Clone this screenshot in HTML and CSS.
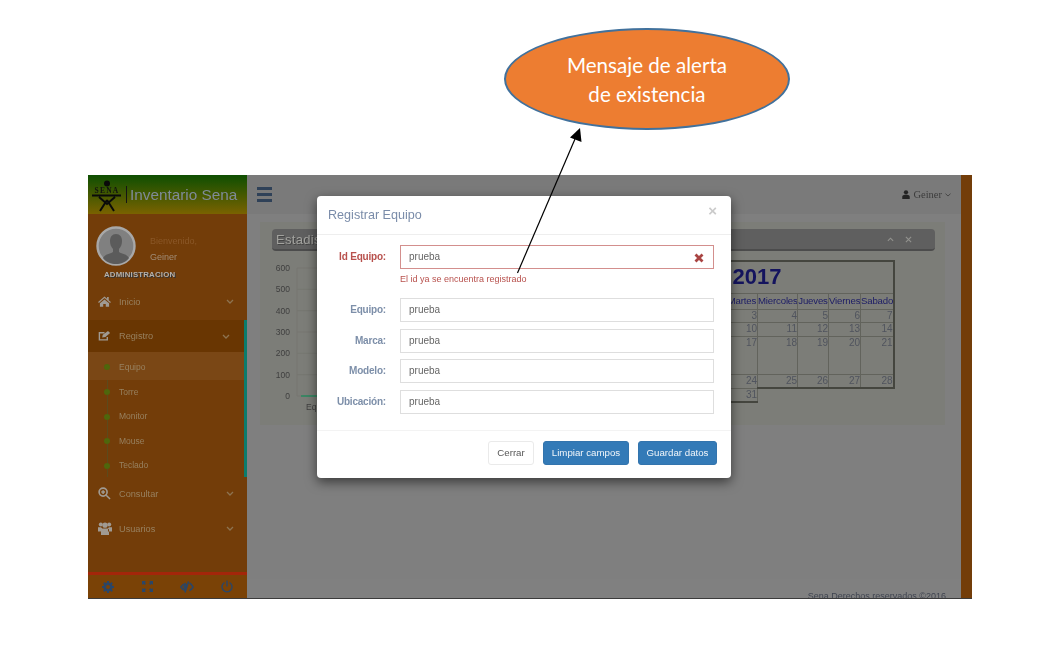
FILE: index.html
```html
<!DOCTYPE html>
<html lang="es">
<head>
<meta charset="utf-8">
<title>Inventario Sena</title>
<link rel="stylesheet" href="styles.css">
</head>
<body>
<div class="shot">
  <aside class="sidebar">
    <div class="brand">
      <svg class="logo" viewBox="0 0 30 32" width="30" height="32">
        <circle cx="15" cy="3.500" r="3" fill="#0a0a0a"/>
        <text x="15" y="12.500" text-anchor="middle" class="logo-text">SENA</text>
        <path d="M0 15.500H29M7 17L15 24L23 17M15 20L8 31M15 20L22 31" fill="none" stroke="#0a0a0a" stroke-width="2"/>
      </svg>
      <span class="brand-bar"></span>
      <span class="brand-name">Inventario Sena</span>
    </div>
    <div class="profile">
      <div class="profile-row">
        <svg class="avatar" viewBox="0 0 40 40" width="40" height="40">
          <circle cx="20" cy="20" r="18.500" fill="#808080" stroke="#a8a8a8" stroke-width="2.400"/>
          <path d="M20 8c-4 0-6 3-6 7 0 3 1 6 3 8v3c-3 2-8 2-10 6 3 4 8 6 13 6s10-2 13-6c-2-4-7-4-10-6v-3c2-2 3-5 3-8 0-4-2-7-6-7z" fill="#5b5b5b"/>
        </svg>
        <div class="welcome">
          <div class="welcome-hi">Bienvenido,</div>
          <div class="welcome-name">Geiner</div>
        </div>
      </div>
      <div class="role">ADMINISTRACION</div>
    </div>
    <nav class="menu">
      <div class="item">
        <svg class="ico" viewBox="0 0 14 12" width="13" height="11"><path d="M7 .5L0 6.500l.9 1L7 2.300l6.100 5.200.9-1-2.400-2V1h-1.800v2L7 .5zM2 8l5-4.200L12 8v3.700H8.400V8.600H5.600v3.100H2z" fill="#a09a92"/></svg>
        <span class="item-label">Inicio</span>
        <svg class="chev" viewBox="0 0 8 5" width="8" height="5"><path d="M1 1l3 3 3-3" fill="none" stroke="#8d7350" stroke-width="1.300"/></svg>
      </div>
      <div class="group">
        <div class="item item-active">
          <svg class="ico" viewBox="0 0 14 12" width="13" height="12"><path d="M10 7v3.200H1.500V2.500H7" fill="none" stroke="#a09a92" stroke-width="1.500"/><path d="M4.500 7.500l.6-2.800L10.800.5l2.200 2.300L8 7z" fill="#a09a92"/></svg>
          <span class="item-label">Registro</span>
          <svg class="chev" viewBox="0 0 8 5" width="8" height="5"><path d="M1 1l3 3 3-3" fill="none" stroke="#8d7350" stroke-width="1.300"/></svg>
        </div>
        <ul class="sub">
          <li class="sub-item sub-current">Equipo</li>
          <li class="sub-item">Torre</li>
          <li class="sub-item">Monitor</li>
          <li class="sub-item">Mouse</li>
          <li class="sub-item">Teclado</li>
        </ul>
      </div>
      <div class="item item-after">
        <svg class="ico" viewBox="0 0 14 14" width="13" height="13"><circle cx="5.500" cy="5.500" r="4.300" fill="none" stroke="#a09a92" stroke-width="1.800"/><path d="M8.800 8.800L13 13M3.500 5.500h4M5.500 3.500v4" fill="none" stroke="#a09a92" stroke-width="1.600"/></svg>
        <span class="item-label">Consultar</span>
        <svg class="chev" viewBox="0 0 8 5" width="8" height="5"><path d="M1 1l3 3 3-3" fill="none" stroke="#8d7350" stroke-width="1.300"/></svg>
      </div>
      <div class="item">
        <svg class="ico" viewBox="0 0 14 13" width="14" height="13"><circle cx="2.800" cy="2.500" r="2" fill="#a09a92"/><circle cx="11.200" cy="2.500" r="2" fill="#a09a92"/><circle cx="7" cy="3.200" r="2.600" fill="#a09a92"/><path d="M0 5.200h3l1 1V9.500H0zM14 5.200h-3l-1 1V9.500h4zM4 6.500h6l1 1V13H3V7.500z" fill="#a09a92"/></svg>
        <span class="item-label item-label-wide">Usuarios</span>
        <svg class="chev" viewBox="0 0 8 5" width="8" height="5"><path d="M1 1l3 3 3-3" fill="none" stroke="#8d7350" stroke-width="1.300"/></svg>
      </div>
    </nav>
    <div class="tools">
      <svg viewBox="0 0 12 12" width="12" height="12"><circle cx="6" cy="6" r="3.300" fill="none" stroke="#2a4668" stroke-width="2.600"/><path d="M6 0v2.500M6 9.500V12M0 6h2.500M9.500 6H12M1.800 1.800l1.800 1.800M8.400 8.400l1.800 1.800M10.200 1.800L8.400 3.600M3.600 8.400l-1.800 1.800" stroke="#2a4668" stroke-width="2"/></svg>
      <svg viewBox="0 0 13 13" width="13" height="13"><path d="M1 5V1h4L3.700 2.300 5 3.600 3.600 5 2.300 3.700zM12 5V1H8l1.300 1.300L8 3.600 9.400 5l1.300-1.300zM1 8v4h4l-1.300-1.300L5 9.400 3.600 8l-1.300 1.300zM12 8v4H8l1.300-1.300L8 9.400 9.400 8l1.300 1.300z" fill="#2a4668"/></svg>
      <svg viewBox="0 0 14 12" width="14" height="12"><path d="M6 2.500C3.500 3 1.800 4.800 1 6c.8 1.300 2 2.700 4 3.300M9.500 2c1.700.8 2.800 2.800 3.500 4-.6 1.100-1.600 2.600-3.500 3.600" fill="none" stroke="#2a4668" stroke-width="1.600"/><path d="M8.500 .5L5 11.500" stroke="#2a4668" stroke-width="1.500"/><path d="M7 3C5 3 3.500 4.500 3.500 6S4.500 8 5.500 8.500z" fill="#2a4668"/></svg>
      <svg viewBox="0 0 12 13" width="12" height="13"><path d="M3.500 2.500a5 5 0 1 0 5 0M6 .5v6" fill="none" stroke="#2a4668" stroke-width="1.400"/></svg>
    </div>
  </aside>

  <main class="main">
    <header class="topbar">
      <div class="burger"><span></span><span></span><span></span></div>
      <div class="user">
        <svg viewBox="0 0 9 10" width="8" height="9"><circle cx="4.500" cy="2.600" r="2.400" fill="#242424"/><path d="M.3 10V7.500C.3 6 2 5.300 4.500 5.300S8.700 6 8.700 7.500V10z" fill="#242424"/></svg>
        <span class="user-name">Geiner</span>
        <svg viewBox="0 0 6 4" width="6" height="4"><path d="M.5.700l2.500 2.300L5.500.700" fill="none" stroke="#3a3a3a" stroke-width=".8"/></svg>
      </div>
    </header>
    <section class="panel">
      <div class="panel-head">
        <span class="panel-title">Estadisticas</span>
        <div class="panel-tools">
          <svg viewBox="0 0 8 5" width="7" height="5"><path d="M1 4l3-3 3 3" fill="none" stroke="#92928e" stroke-width="1.300"/></svg>
          <svg viewBox="0 0 8 8" width="7" height="7"><path d="M1 1l6 6M7 1L1 7" fill="none" stroke="#92928e" stroke-width="1.300"/></svg>
        </div>
      </div>
      <div class="panel-body">
        <svg class="chart" viewBox="0 0 374 165" width="374" height="165">
          <g class="grid">
            <path d="M25 17H370M25 38.300H370M25 59.700H370M25 81H370M25 102.300H370M25 123.700H370M25 145H370M25 17V145"/>
          </g>
          <g class="axis">
            <text x="18" y="20">600</text>
            <text x="18" y="41.300">500</text>
            <text x="18" y="62.700">400</text>
            <text x="18" y="84">300</text>
            <text x="18" y="105.300">200</text>
            <text x="18" y="126.700">100</text>
            <text x="18" y="148">0</text>
          </g>
          <path d="M29 145H360" class="series"/>
          <text x="34" y="159" class="xlabel">Equipos</text>
        </svg>
        <table class="cal">
          <colgroup>
            <col class="c-w"><col class="c-w"><col class="c-n"><col class="c-w"><col class="c-n"><col class="c-v"><col class="c-s">
          </colgroup>
          <tr class="r-title"><td colspan="7" class="cal-title">Enero 2017</td></tr>
          <tr class="r-head"><th>Domingo</th><th>Lunes</th><th>Martes</th><th>Miercoles</th><th>Jueves</th><th>Viernes</th><th class="edge">Sabado</th></tr>
          <tr class="r-1"><td>1</td><td>2</td><td>3</td><td>4</td><td>5</td><td>6</td><td class="edge">7</td></tr>
          <tr class="r-1"><td>8</td><td>9</td><td>10</td><td>11</td><td>12</td><td>13</td><td class="edge">14</td></tr>
          <tr class="r-3"><td>15</td><td>16</td><td>17</td><td>18</td><td>19</td><td>20</td><td class="edge">21</td></tr>
          <tr class="r-1"><td>22</td><td>23</td><td>24</td><td class="foot">25</td><td class="foot">26</td><td class="foot">27</td><td class="edge foot">28</td></tr>
          <tr class="r-1"><td class="foot">29</td><td class="foot">30</td><td class="foot">31</td></tr>
        </table>
      </div>
    </section>
    <footer class="page-foot">Sena Derechos reservados ©2016</footer>
  </main>
  <div class="rightbar"></div>

  <div class="modal">
    <div class="modal-head">
      <h4 class="modal-title">Registrar Equipo</h4>
      <span class="modal-close">×</span>
    </div>
    <form class="modal-body">
      <div class="field field-error">
        <label class="field-label">Id Equipo:</label>
        <div class="field-box">
          <div class="input input-error">prueba
            <svg class="input-x" viewBox="0 0 10 10" width="10" height="10"><path d="M1.500 1.500l7 7M8.500 1.500l-7 7" stroke="#a94442" stroke-width="2.800"/></svg>
          </div>
          <div class="error-text">El id ya se encuentra registrado</div>
        </div>
      </div>
      <div class="field"><label class="field-label">Equipo:</label><div class="field-box"><div class="input">prueba</div></div></div>
      <div class="field"><label class="field-label">Marca:</label><div class="field-box"><div class="input">prueba</div></div></div>
      <div class="field"><label class="field-label">Modelo:</label><div class="field-box"><div class="input">prueba</div></div></div>
      <div class="field"><label class="field-label">Ubicación:</label><div class="field-box"><div class="input">prueba</div></div></div>
    </form>
    <div class="modal-foot">
      <button class="btn btn-plain" type="button">Cerrar</button>
      <button class="btn btn-blue btn-clear" type="button">Limpiar campos</button>
      <button class="btn btn-blue btn-save" type="button">Guardar datos</button>
    </div>
  </div>
</div>

<div class="callout">Mensaje de alerta<br>de existencia</div>
<svg class="arrow" viewBox="0 0 1059 652" width="1059" height="652">
  <path d="M517.500 273L575 139" stroke="#000" stroke-width="1.200" fill="none"/>
  <path d="M580 128L581.500 142L570 137.500z" fill="#000"/>
</svg>
</body>
</html>
```
FILE: styles.css
```css
* { box-sizing: border-box; }
html, body { margin: 0; padding: 0; }
body {
  position: relative;
  width: 1059px;
  height: 652px;
  overflow: hidden;
  background: #fff;
  font-family: "Liberation Sans", Arial, sans-serif;
}

.shot {
  position: relative;
  display: flex;
  width: 884px;
  height: 424px;
  margin: 175px 0 0 88px;
  overflow: hidden;
  background: #7f7f7f;
  border-bottom: 1px solid #3b3b3b;
  filter: blur(0.35px);
}

/* Sidebar */
.sidebar {
  display: flex;
  flex-direction: column;
  flex: 0 0 159px;
  background: #733d09;
}
.brand {
  display: flex;
  align-items: center;
  height: 39px;
  padding: 0 0 0 4px;
  background: linear-gradient(#0e4f02, #7a6200);
}
.logo { flex: none; margin-top: 3px; }
.logo-text { font: bold 7.500px "Liberation Serif", serif; letter-spacing: 1.200px; fill: #111; }
.brand-bar { width: 1px; height: 17px; margin: 0 3px 0 4px; background: #151515; }
.brand-name { font-size: 15.300px; color: #7f8b97; white-space: nowrap; }
.profile { height: 69px; padding: 12px 0 0 8px; }
.profile-row { display: flex; align-items: flex-start; height: 44px; }
.avatar { flex: none; }
.welcome { margin: 10px 0 0 14px; font-size: 9px; }
.welcome-hi { color: #8a5727; height: 16px; }
.welcome-name { color: #a08c76; }
.role {
  margin: 0 0 0 8px;
  font-size: 7.800px;
  font-weight: bold;
  letter-spacing: .2px;
  color: #b4b0aa;
  text-shadow: 1px 1px 0 #333;
}
.menu { display: flex; flex-direction: column; }
.item {
  display: flex;
  align-items: center;
  height: 35px;
  padding: 0 13px 0 10px;
}
.menu > .item:first-child { height: 37px; }
.item-after { margin-top: -1px; }
.ico { flex: none; }
.item-label {
  flex: 1;
  margin-left: 8px;
  font-size: 9.200px;
  color: #97805f;
}
.item-label-wide { margin-left: 7px; }
.chev { flex: none; }
.group { border-right: 3px solid #0b7c6c; }
.item-active { height: 32px; padding-right: 14px; background: #693602; }
.sub {
  position: relative;
  margin: 0;
  padding: 0;
  height: 125px;
  list-style: none;
}
.sub::before {
  content: "";
  position: absolute;
  left: 18.500px;
  top: 0;
  bottom: 0;
  width: 1px;
  background: #5c4a1c;
}
.sub-item {
  position: relative;
  height: 24.500px;
  padding-left: 31px;
  font-size: 8.500px;
  line-height: 24.500px;
  color: #97805f;
}
.sub-item::before {
  content: "";
  position: absolute;
  left: 16px;
  top: 9.500px;
  width: 6px;
  height: 6px;
  border-radius: 50%;
  background: #4f660c;
}
.sub-current { height: 27.500px; padding-top: 3px; background: #7a4715; }
.sub-current::before { top: 12px; }
.tools {
  display: flex;
  align-items: center;
  justify-content: space-between;
  height: 26px;
  margin-top: auto;
  padding: 0 14px 0 14px;
  background: #7a4206;
  border-top: 3px solid #a3260a;
}

/* Main */
.main {
  display: flex;
  flex-direction: column;
  flex: 1;
  min-width: 0;
  background: #7f7f7f;
}
.topbar {
  display: flex;
  align-items: center;
  justify-content: space-between;
  flex: none;
  height: 39px;
  padding: 0 10px 0 10px;
  background: #7a7a7a;
}
.burger { display: flex; flex-direction: column; gap: 3px; }
.burger span { display: block; width: 15px; height: 3px; background: #2f4158; }
.user { display: flex; align-items: center; gap: 3px; }
.user-name { font: 10.500px "Liberation Serif", serif; color: #3c3c3c; }
.panel {
  flex: none;
  width: 685px;
  height: 203px;
  margin: 8px 0 0 13px;
  padding: 7px 10px 0 12px;
  background: #7c7d78;
}
.panel-head {
  display: flex;
  align-items: center;
  justify-content: space-between;
  height: 22px;
  padding: 0 23px 0 4px;
  background: #5f5f5f;
  border-bottom: 2px solid #4c4c4c;
  border-radius: 4px;
}
.panel-title {
  font-size: 13px;
  letter-spacing: .3px;
  color: #a2a29e;
  text-shadow: 1px 1px 0 #444;
}
.panel-tools { display: flex; align-items: center; gap: 11px; }
.panel-body { display: flex; align-items: flex-start; }
.chart { flex: none; }
.grid path { fill: none; stroke: #767771; stroke-width: 1; }
.axis text { font-size: 8.500px; fill: #3f3f3f; text-anchor: end; }
.series { fill: none; stroke: #2a8a5f; stroke-width: 1.500; }
.xlabel { font-size: 8.500px; fill: #3f3f3f; }

/* Calendar */
.cal {
  flex: none;
  width: 247px;
  margin-top: 9px;
  table-layout: fixed;
  border-collapse: collapse;
  font-size: 10px;
  color: #50545e;
}
.c-w { width: 40px; }
.c-n { width: 31px; }
.c-v { width: 32px; }
.c-s { width: 33px; }
.cal td, .cal th {
  padding: 0;
  border: 1px solid #62635c;
  text-align: right;
  vertical-align: top;
  line-height: 12px;
  overflow: hidden;
  white-space: nowrap;
}
.cal th {
  font-size: 9.600px;
  font-weight: normal;
  line-height: 14px;
  text-align: center;
  color: #1c1c66;
  letter-spacing: -.15px;
}
.cal .edge { border-right: 2px solid #45463f; }
.cal .foot { border-bottom: 2px solid #45463f; }
.cal .cal-title {
  padding-right: 111px;
  border: 2px solid #45463f;
  border-left: 0;
  border-bottom: 1px solid #62635c;
  font-size: 22px;
  font-weight: bold;
  line-height: 30px;
  color: #14145e;
}
.r-title { height: 32px; }
.r-head { height: 16px; }
.r-1 { height: 13.500px; }
.r-3 { height: 38.500px; }
.page-foot {
  flex: none;
  height: 19px;
  margin-top: auto;
  padding: 10px 15px 0 0;
  background: #808080;
  font-size: 9px;
  line-height: 14px;
  text-align: right;
  color: #3f4450;
}
.rightbar { flex: 0 0 11px; background: #733d09; }

/* Modal */
.modal {
  position: absolute;
  left: 229px;
  top: 21px;
  width: 414px;
  height: 282px;
  background: #fff;
  border-radius: 4px;
  box-shadow: 0 4px 12px rgba(0, 0, 0, .55);
}
.modal-head {
  display: flex;
  justify-content: space-between;
  height: 39px;
  padding: 11px 14px 0 11px;
  border-bottom: 1px solid #eee;
}
.modal-title {
  margin: 0;
  font-size: 12.600px;
  font-weight: normal;
  line-height: 16px;
  color: #7a8ca9;
}
.modal-close {
  font-size: 15px;
  font-weight: bold;
  line-height: 8px;
  color: #cbcbcb;
}
.modal-body {
  height: 196px;
  padding: 10px 17px 0 0;
  border-bottom: 1px solid #f3f3f3;
}
.field { display: flex; margin-bottom: 6.500px; }
.field-label {
  flex: 0 0 69px;
  align-self: flex-start;
  margin-right: 14px;
  padding-top: 5px;
  font-size: 10px;
  font-weight: bold;
  letter-spacing: -.2px;
  line-height: 14px;
  text-align: right;
  color: #7d8fa9;
}
.field-box { flex: 1; }
.field-error { margin-bottom: 6px; }
.field-error .field-label { color: #b8514d; }
.input {
  position: relative;
  height: 24px;
  padding: 0 8px;
  border: 1px solid #dedede;
  font-size: 10px;
  line-height: 22px;
  color: #666;
}
.input-error { border-color: #d38f8d; }
.input-x { position: absolute; right: 9px; top: 7px; }
.error-text {
  height: 23px;
  padding-top: 3px;
  font-size: 9px;
  line-height: 14px;
  color: #b8514d;
}
.modal-foot {
  display: flex;
  justify-content: flex-end;
  gap: 9px;
  padding: 10px 14px 0 0;
}
.btn {
  height: 24px;
  padding: 0;
  border: 1px solid transparent;
  border-radius: 3px;
  font-family: "Liberation Sans", Arial, sans-serif;
  font-size: 9.700px;
  line-height: 20px;
}
.btn-plain { width: 46px; background: #fff; border-color: #eaeaea; color: #555; }
.btn-blue { background: #337ab7; border-color: #3374ad; color: #f2f6fa; }
.btn-clear { width: 86px; }
.btn-save { width: 79px; }

/* Annotation drawn over the screenshot */
.callout {
  position: absolute;
  left: 504px;
  top: 28px;
  display: flex;
  align-items: center;
  justify-content: center;
  width: 286px;
  height: 102px;
  padding-top: 2px;
  border: 2px solid #41719c;
  border-radius: 50%;
  background: #ed7d31;
  font-family: Lato, sans-serif;
  font-size: 20.600px;
  line-height: 29px;
  text-align: center;
  color: #fff;
}
.arrow { position: absolute; left: 0; top: 0; pointer-events: none; }
```
